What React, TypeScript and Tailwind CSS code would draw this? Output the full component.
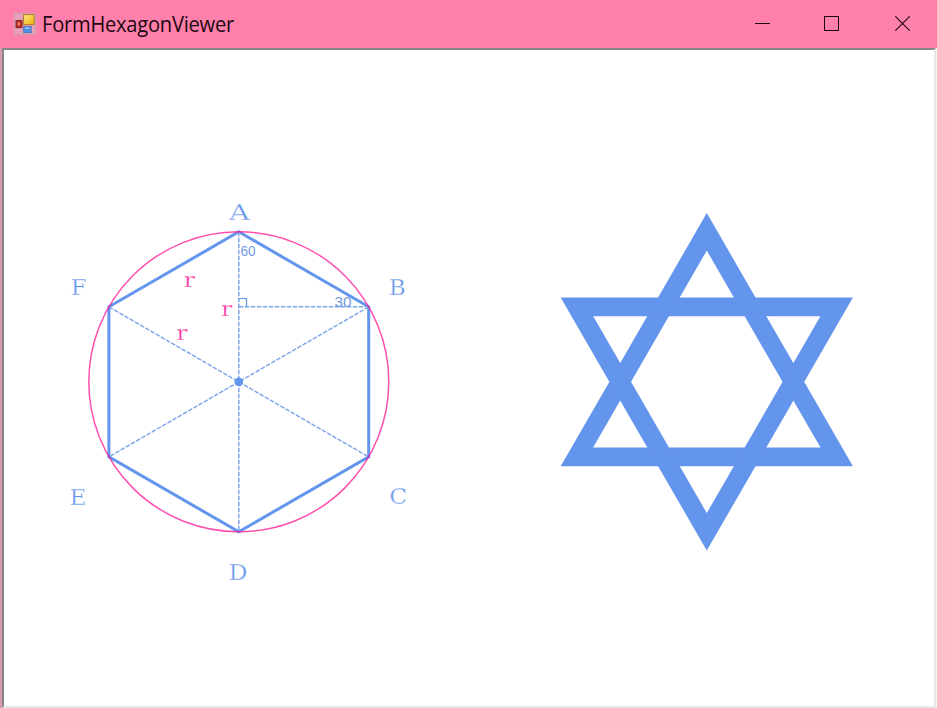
const VERTEX_LABELS = [
  { t: 'A', x: 239.3, y: 219.5, w: 20.5 },
  { t: 'B', x: 397.3, y: 294.5, w: 17 },
  { t: 'C', x: 398.3, y: 504.3, w: 18 },
  { t: 'D', x: 238, y: 579.5, w: 19 },
  { t: 'E', x: 78, y: 504.5, w: 17 },
  { t: 'F', x: 78.8, y: 294.5, w: 16 },
];

const RADIUS_LABELS = [
  { x: 189.5, y: 287 },
  { x: 226.8, y: 315.5 },
  { x: 182, y: 339.8 },
];

function FormIcon() {
  return (
    <svg width="22" height="22" viewBox="0 0 22 22" className="shrink-0">
      <defs>
        <linearGradient id="gold" x1="0" y1="0" x2="1" y2="1">
          <stop offset="0" stopColor="#ffe98a" />
          <stop offset="1" stopColor="#f0b000" />
        </linearGradient>
      </defs>
      <rect x="0.7" y="0.7" width="20.6" height="20.6" fill="#ef9fbc" stroke="#c8a5b2" strokeWidth="1.2" />
      <path d="M7 1V21M1 6.5H21M1 15.5H21" stroke="#d3a6b6" strokeWidth="1" />
      <rect x="9.6" y="1.6" width="10.6" height="10" fill="url(#gold)" stroke="#b07828" strokeWidth="1" />
      <rect x="2" y="7.6" width="6" height="7" fill="#b92a20" stroke="#8d2929" strokeWidth="1" />
      <rect x="3.8" y="9.4" width="2" height="3" fill="#ef9c87" />
      <rect x="9.6" y="13.6" width="7.6" height="6" fill="#4c91e5" stroke="#5577b5" strokeWidth="1" />
      <rect x="11" y="14.4" width="4.5" height="1.6" fill="#91c4f7" />
    </svg>
  );
}

function TitleBar() {
  return (
    <header className="flex h-12 shrink-0 items-center bg-[#ff80ab] pl-3.5 text-[#1c0810]">
      <FormIcon />
      <h1 className="ml-1.5 origin-left scale-x-[0.959] font-['Open_Sans','Noto_Sans',sans-serif] text-[21px] leading-7 tracking-[-0.26px] whitespace-nowrap">
        FormHexagonViewer
      </h1>
      <div className="ml-auto flex">
        <button className="flex h-12 w-[69px] items-center justify-center" aria-label="Minimize">
          <svg width="15" height="15" shapeRendering="crispEdges"><path d="M0 6.5H15" stroke="currentColor" /></svg>
        </button>
        <button className="flex h-12 w-[70px] items-center justify-center pr-0.5 pb-px" aria-label="Maximize">
          <svg width="15" height="15" shapeRendering="crispEdges"><rect x="0.5" y="0.5" width="14" height="14" fill="none" stroke="currentColor" /></svg>
        </button>
        <button className="flex h-12 w-[70px] items-center justify-center pb-px" aria-label="Close">
          <svg width="15" height="15"><path d="M0.3 0.3L14.7 14.7M14.7 0.3L0.3 14.7" stroke="currentColor" strokeWidth="1.1" /></svg>
        </button>
      </div>
    </header>
  );
}

function Drawing() {
  return (
    <svg width="929" height="655" viewBox="5 51 929 655" className="block">
      <g fill="none">
        <path d="M238.8 231.8L368.7 306.8V456.8L238.8 531.8L108.9 456.8V306.8Z" stroke="#6495ed" strokeWidth="3" />
        <g stroke="#7fa5ea" strokeWidth="1.5" strokeDasharray="4.5 1.5">
          <path d="M238.8 231.8V531.8" />
          <path d="M108.9 306.8L368.7 456.8" />
          <path d="M368.7 306.8L108.9 456.8" />
          <path d="M238.8 306.8H368.7" />
        </g>
        <path d="M239 298.5H246.5V306.5" stroke="#6495ed" strokeWidth="1.2" />
        <circle cx="238.8" cy="381.8" r="150" stroke="#ff1493" strokeOpacity="0.75" strokeWidth="1.5" />
      </g>
      <circle cx="238.8" cy="381.8" r="4.4" fill="#6495ed" />
      <g fill="#6495ed" className="font-['DejaVu_Serif',serif] text-[22.5px]" stroke="white" strokeWidth="0.4">
        {VERTEX_LABELS.map((l) => (
          <text key={l.t} x={l.x - l.w / 2} y={l.y} textLength={l.w} lengthAdjust="spacingAndGlyphs">{l.t}</text>
        ))}
      </g>
      <g fill="#ff1493" fillOpacity="0.95" className="font-['DejaVu_Serif',serif] text-[20.5px]" stroke="white" strokeWidth="0.3">
        {RADIUS_LABELS.map((l) => (
          <text key={l.x} x={l.x - 5.5} y={l.y} textLength="11" lengthAdjust="spacingAndGlyphs">r</text>
        ))}
      </g>
      <g fill="#7098df" className="font-['Liberation_Sans',Arial,sans-serif] text-[15px]">
        <text x="240.5" y="256" textLength="15" lengthAdjust="spacingAndGlyphs">60</text>
        <text x="334.5" y="306.5" textLength="17" lengthAdjust="spacingAndGlyphs">30</text>
      </g>
      <g fill="none" stroke="#6495ed" strokeWidth="18.75" strokeMiterlimit="10">
        <path d="M706.8 231.8L836.7 456.8H576.9Z" />
        <path d="M706.8 531.8L576.9 306.8H836.7Z" />
      </g>
    </svg>
  );
}

export default function App() {
  return (
    <div className="flex h-[708px] w-[937px] flex-col overflow-hidden bg-white">
      <TitleBar />
      <main className="flex min-h-0 flex-1">
        <div className="w-0.5 shrink-0 bg-[#d99aaf]" />
        <div className="flex-1 border-t-2 border-r-2 border-b-2 border-l-2 border-t-[#8a8586] border-r-[#e7e7e7] border-b-[#e7e7e7] border-l-[#8a8586] bg-white">
          <div className="pt-px pl-px">
            <Drawing />
          </div>
        </div>
        <div className="w-px shrink-0 bg-[#f8f8f8]" />
      </main>
    </div>
  );
}
